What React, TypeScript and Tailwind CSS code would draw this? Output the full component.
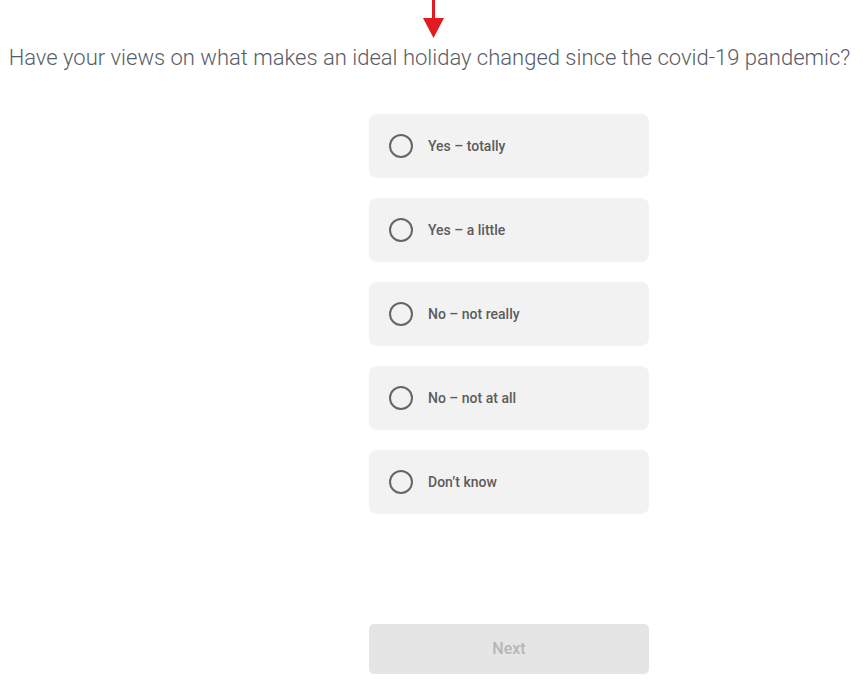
const options = ["Yes – totally", "Yes – a little", "No – not really", "No – not at all", "Don’t know"];

export default function App() {
  return (
    <div className="h-[694px] w-[863px] bg-white font-['Roboto',sans-serif]">
      <div className="flex justify-center pl-[4px]">
        <svg width="22" height="39" viewBox="0 0 22 39">
          <rect x="9" y="0" width="3" height="20" fill="#e21b22" />
          <polygon points="0,18 21,18 10.5,38" fill="#e21b22" />
        </svg>
      </div>
      <h1 className="mt-[4px] pr-1 text-center text-[22px] font-light leading-[30px] text-[#575d66]">
        Have your views on what makes an ideal holiday changed since the covid-19 pandemic?
      </h1>
      <div className="ml-[369px] mt-[41px] flex w-[280px] flex-col gap-5">
        {options.map((o) => (
          <label key={o} className="flex h-16 cursor-pointer items-center gap-[15px] rounded-lg bg-[#f2f2f2] pb-px pl-5 pr-[19px]">
            <span className="h-6 w-6 rounded-full border-2 border-[#666]" />
            <span className="text-sm font-medium text-[#5c5c5c]">{o}</span>
          </label>
        ))}
      </div>
      <div className="ml-[369px] mt-[110px] w-[280px]">
        <button className="h-[50px] w-full rounded-[5px] bg-[#e5e5e5] text-base font-medium text-[#b5b5b5]">Next</button>
      </div>
    </div>
  );
}
